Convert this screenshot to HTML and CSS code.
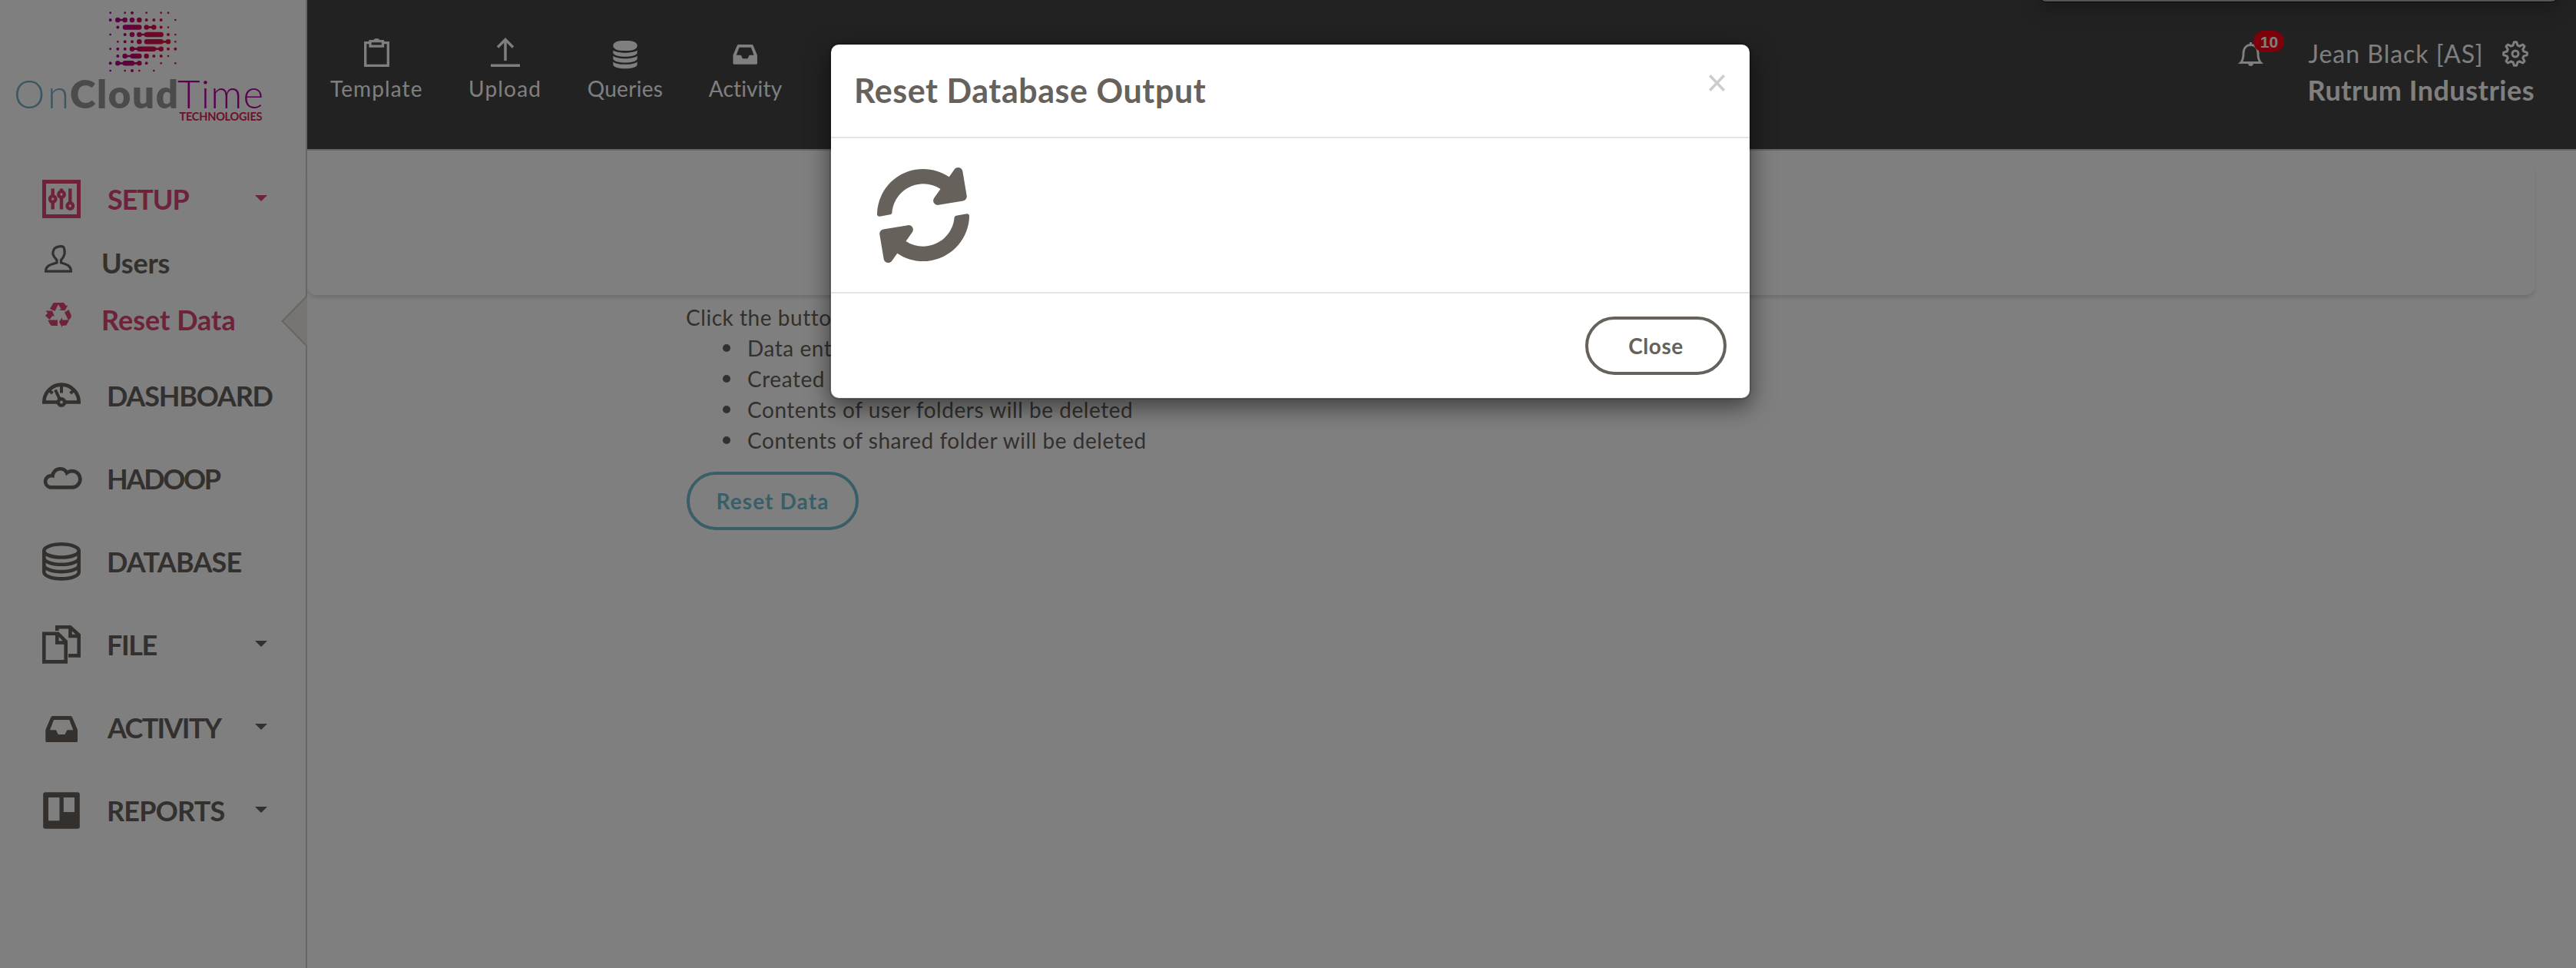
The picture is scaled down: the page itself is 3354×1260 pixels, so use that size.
FILE: index.html
```html
<!DOCTYPE html>
<html lang="en">
<head>
<meta charset="utf-8">
<title>Reset Data</title>
<link rel="stylesheet" href="styles.css">
</head>
<body>
<div class="wrapper">
  <aside class="sidebar">
    <div class="logo">
      <svg width="398" height="213" viewBox="0 0 398 213">
        <defs><linearGradient id="lg" gradientUnits="userSpaceOnUse" x1="431" y1="0" x2="685" y2="0"><stop offset="0" stop-color="#a80098"/><stop offset="0.6" stop-color="#d4104e"/><stop offset="1" stop-color="#ee1236"/></linearGradient></defs>
        <g transform="scale(.33333)" stroke="url(#lg)" stroke-linecap="round" fill="none">
          <path stroke-width="8" d="M431 50h.1M488 50h.1M572 50h.1M629 50h.1M657 50h.1M685 78h.1M657 106.500h.1M431 135h.1M685 135h.1M460 163h.1M685 163h.1M431 191h.1M657 219h.1M629 247h.1M685 247h.1M431 276h.1M488 276h.1M544 276h.1M601 276h.1M460 78.1h28M572 106.100h29M544 135.100h28M629 163.100h28M516 191.100h28M601 191.100h28M488 219.100h28M460 247.100h28M516 247.100h28"/>
          <path stroke-width="12" d="M516 50h.1M431 78h.1M572 78h.1M601 78h.1M629 78h.1M460 106.500h.1M629 106.500h.1M488 135h.1M657 135h.1M488 163h.1M516 163h.1M460 191h.1M488 191h.1M657 191h.1M685 191h.1M460 219h.1M601 219h.1M629 219h.1M431 247h.1M572 247h.1M516 276h.1"/>
          <path stroke-width="19.500" d="M460 78h.1M488 78h.1M516 78h.1M544 78h.1M489 106.500l55 .1M572 106.500h.1M601 106.500h.1M516 135h.1M544 135h.1M573 135l56 .1M544 163h.1M573 163l56 .1M657 163h.1M516 191h.1M544 191l56 .1M629 191h.1M488 219h.1M518 219l26 .1M572 219h.1M460 247h.1M488 247l28 .1M544 247h.1"/>
        </g>
        <g class="logo-word">
          <text class="w-on" x="18" y="140.500" textLength="72">On</text>
          <text class="w-cloud" x="91" y="140.500" textLength="141">Cloud</text>
          <text class="w-time" x="231" y="140.500" textLength="112">Time</text>
          <text class="w-tech" x="233.500" y="157" textLength="108">TECHNOLOGIES</text>
        </g>
      </svg>
    </div>
    <nav>
      <a class="item setup active"><svg class="ico" viewBox="0 0 50 50"><path fill="none" stroke="currentColor" stroke-width="5" d="M2.500 2.500h45v45h-45z"/><path stroke="currentColor" stroke-width="4.400" d="M13.700 11.500v27M25 11.500v27M36.300 11.500v27"/><g fill="#fff" stroke="currentColor" stroke-width="4.300"><circle cx="13.700" cy="25" r="3.800"/><circle cx="25" cy="19" r="3.800"/><circle cx="36.300" cy="34" r="3.800"/></g></svg><span>SETUP</span><i class="caret"></i></a>
      <div class="sub">
        <a class="subitem users"><svg width="36" height="36" viewBox="0 0 36 36"><path fill="none" stroke="currentColor" stroke-width="3.200" d="M1.500 34.200C1.500 27 8 25 16 23V19.500C12.500 16 11.500 14 10.800 11.500C11 9 11.300 7.500 12 6C14 1.500 24 0 25.500 4C26.500 7 26.300 8.500 26 11.500C25.500 14 24.500 16.500 21.500 19.500V23C29 25 34.500 27 34.500 34.200Z"/></svg><span>Users</span></a>
        <a class="subitem reset active"><svg width="36" height="34" viewBox="-1 0 36 34"><path fill="currentColor" d="M6 8L10 1L11.500 0H18L12.500 11ZM15.500 0H24L27 4L29.500 3L25.500 10.200L17.500 9.500L20.500 8ZM.5 10.500H9L12 18L9.500 17L5.500 22L0 17L3 13.500ZM5.500 22.500H16V30H8L6 28L3.500 23ZM25 12.500L30.500 9L34 17L33 20L30 23ZM18 25L22 19V22.500H31L27.500 29.500L22 30V32.700Z"/></svg><span>Reset Data</span></a>
      </div>
      <a class="item dash"><svg class="ico" viewBox="0 0 50 50"><g fill="none" stroke="currentColor"><path stroke-width="4.600" d="M2.300 33.500A22.700 22.900 0 0 1 47.700 33.500Z"/><path stroke-width="4" d="M25 11v10.500M17 17.500L23 30M9.500 18.500l4 3.500M40.500 18.500l-4 3.500"/></g><circle cx="25" cy="33.500" r="4.200" fill="#fff" stroke="currentColor" stroke-width="4.500"/></svg><span>DASHBOARD</span></a>
      <a class="item hadoop"><svg class="ico" viewBox="0 0 50 50"><path fill="none" stroke="currentColor" stroke-width="4.700" d="M10 36.300A7.650 7.650 0 0 1 13.500 21.300C15 10.500 28.500 9.500 32 17.500A10.600 10.600 0 1 1 38 36.300Z"/></svg><span>HADOOP</span></a>
      <a class="item database"><svg class="ico" viewBox="0 0 50 50"><g fill="none" stroke="currentColor" stroke-width="4.600"><ellipse cx="25" cy="10.900" rx="22.700" ry="8.600"/><path d="M2.300 10.900V38.800A22.700 8.600 0 0 0 47.700 38.800V10.900M2.300 20.200A22.700 8.600 0 0 0 47.700 20.200M2.300 29.500A22.700 8.600 0 0 0 47.700 29.500"/></g></svg><span>DATABASE</span></a>
      <a class="item file"><svg class="ico" viewBox="0 0 50 50"><g fill="none" stroke="currentColor" stroke-width="4.600"><path d="M2.300 10.700H20.500L30.700 21V47.400H2.300ZM19.300 10.700V22.500H31M19.300 7V2.300H36.500L47.700 12.500V39.400H34M36.500 2.300V14H48"/></g></svg><span>FILE</span><i class="caret"></i></a>
      <a class="item activity"><svg class="ico" viewBox="0 0 50 50"><path fill="currentColor" fill-rule="evenodd" d="M13.500 10H36.800Q38.300 10 39 11.500L46 28V42.500Q46 44 44.500 44H5.800Q4.300 44 4.300 42.500V28L11.300 11.500Q12 10 13.500 10ZM15 15L10 28.300H18L20.700 34H29.500L32.300 28.300H40.300L35.300 15Z"/></svg><span>ACTIVITY</span><i class="caret"></i></a>
      <a class="item reports"><svg class="ico" viewBox="0 0 50 50"><path fill="currentColor" fill-rule="evenodd" d="M4 1.300H46Q48.800 1.300 48.800 4V46Q48.800 48.700 46 48.700H4Q1.200 48.700 1.200 46V4Q1.200 1.300 4 1.300ZM8 8V38.300H22.500V8ZM27.800 8V27H42V8Z"/></svg><span>REPORTS</span><i class="caret"></i></a>
    </nav>
    <svg class="pointer" width="34" height="66" viewBox="0 0 34 66"><path fill="#eeebe4" d="M34 1L1 33L34 65Z"/><path fill="none" stroke="#cfcdc8" stroke-width="2" d="M33 1L1.500 33L33 65"/></svg>
  </aside>
  <main class="main">
    <header class="topbar">
      <div class="tools">
        <a class="tool t-template"><svg viewBox="0 0 40 40"><g fill="none" stroke="currentColor"><path stroke-width="3.300" d="M11 5.700H5.700V35.400H35.300V5.700H30"/><path stroke-width="3.300" d="M12 3.700H28.500V10.200H12Z"/></g><path fill="currentColor" d="M16 4q0-4 4.300-4t4.300 4z"/></svg><span>Template</span></a>
        <a class="tool t-upload"><svg viewBox="0 0 40 40"><path fill="none" stroke="currentColor" stroke-width="3.500" d="M20 2V29M10 11.500L20 1.500L30 11.500M1 35.300H39"/></svg><span>Upload</span></a>
        <a class="tool t-queries"><svg viewBox="0 0 40 40"><g fill="currentColor"><path d="M4.300 15C9 19.600 31 19.600 35.700 15V18.500C35.700 25.500 4.300 25.500 4.300 18.500Z"/><path d="M4.300 22.700C9 27.300 31 27.300 35.700 22.700V26.200C35.700 33.200 4.300 33.200 4.300 26.200ZM4.300 30.400C9 35 31 35 35.700 30.400V34C35.700 41 4.300 41 4.300 34Z"/><rect x="4.300" y="3" width="31.400" height="13" rx="11" ry="6"/><path fill="none" stroke="#444" stroke-width="1.600" d="M4 14.500C9 18.800 31 18.800 36 14.500"/></g></svg><span>Queries</span></a>
        <a class="tool t-activity"><svg viewBox="0 0 40 40"><path transform="translate(1.200 .5) scale(.755)" fill="currentColor" fill-rule="evenodd" d="M13.500 10H36.800Q38.300 10 39 11.500L46 28V42.500Q46 44 44.500 44H5.800Q4.300 44 4.300 42.500V28L11.300 11.500Q12 10 13.500 10ZM15 15L10 28.300H18L20.700 34H29.500L32.300 28.300H40.300L35.300 15Z"/></svg><span>Activity</span></a>
      </div>
      <div class="account">
        <a class="bell"><svg width="31" height="32" viewBox="0 0 31 32"><path fill="none" stroke="currentColor" stroke-width="2.900" d="M2.500 26.500H28.500C25.500 23.500 25 20.500 25 14.500C25 7.500 21 3.500 15.500 3.500S6 7.500 6 14.500C6 20.500 5.500 23.500 2.500 26.500ZM15.500 0v4"/><path fill="currentColor" d="M12 27h7q0 4-3.500 4t-3.500-4z"/></svg><b class="badge">10</b></a>
        <div class="who">
          <div class="user"><span>Jean Black [AS]</span><svg width="34" height="34" viewBox="-17 -17 34 34"><g fill="none" stroke="currentColor" stroke-width="3"><path stroke-linejoin="round" d="M-1.600-15.300H1.600L3.100-10.800L5.500-9.800L9.700-12L12-9.700L9.800-5.500L10.800-3.100L15.300-1.600V1.600L10.800 3.100L9.800 5.500L12 9.700L9.700 12L5.500 9.800L3.100 10.800L1.600 15.300H-1.600L-3.100 10.800L-5.500 9.800L-9.700 12L-12 9.700L-9.800 5.500L-10.800 3.100L-15.300 1.600V-1.600L-10.800-3.100L-9.800-5.500L-12-9.700L-9.700-12L-5.500-9.800L-3.100-10.800Z"/><circle r="4"/></g></svg></div>
          <div class="company">Rutrum Industries</div>
        </div>
      </div>
    </header>
    <div class="panel"></div>
    <section class="content">
      <p>Click the button</p>
      <ul>
        <li>Data entered</li>
        <li>Created</li>
        <li>Contents of user folders will be deleted</li>
        <li class="shared">Contents of shared folder will be deleted</li>
      </ul>
      <button class="btn btn-info">Reset Data</button>
    </section>
  </main>
</div>
<div class="backdrop"></div>
<div class="popup-edge"></div>
<div class="modal">
  <div class="modal-header"><h4>Reset Database Output</h4><svg class="x" width="21" height="22" viewBox="0 0 21 22"><path stroke="#ccc" stroke-width="3.500" d="M1.200 1.200L19.800 20.800M19.800 1.200L1.200 20.800"/></svg></div>
  <div class="modal-body"><svg width="124" height="124" viewBox="0 0 512 512"><path transform="rotate(-9.500 256 256)" fill="#66615b" d="M370.720 133.280C339.458 104.008 298.888 87.962 255.848 88c-77.458.068-144.328 53.178-162.791 126.850-1.344 5.363-6.122 9.150-11.651 9.150H24.103c-7.498 0-13.194-6.807-11.807-14.176C33.933 94.924 134.813 8 256 8c66.448 0 126.791 26.136 171.315 68.685L463.030 40.970C478.149 25.851 504 36.559 504 57.941V192c0 13.255-10.745 24-24 24H345.941c-21.382 0-32.090-25.851-16.971-40.971l41.750-41.749zM32 296h134.059c21.382 0 32.090 25.851 16.971 40.971l-41.750 41.750c31.262 29.273 71.835 45.319 114.876 45.280 77.418-.070 144.315-53.144 162.787-126.849 1.344-5.363 6.122-9.150 11.651-9.150h57.304c7.498 0 13.194 6.807 11.807 14.176C478.067 417.076 377.187 504 256 504c-66.448 0-126.791-26.136-171.315-68.685L48.970 471.030C33.851 486.149 8 475.441 8 454.059V320c0-13.255 10.745-24 24-24z"/></svg></div>
  <div class="modal-footer"><button class="btn btn-close">Close</button></div>
</div>
</body>
</html>
```
FILE: styles.css
```css
* { box-sizing: border-box; }
body {
  margin: 0;
  height: 1260px;
  overflow: hidden;
  background: #fff;
  color: #66615b;
  font: 400 28px/40px Lato, "Open Sans", sans-serif;
}
svg { display: block; flex: none; overflow: visible; }
.wrapper { display: flex; height: 1260px; }

/* Sidebar */
.sidebar { position: relative; width: 400px; border-right: 2px solid #d0cfcd; }
.logo { height: 213px; }
.logo-word { font-size: 51px; }
.w-on { font-weight: 300; fill: #78aec2; }
.w-cloud { font-weight: 800; fill: #949698; }
.w-time { font-weight: 300; fill: #b400a0; }
.w-tech { font-size: 14.5px; font-weight: 700; fill: #e01c56; }
.item, .subitem { display: flex; align-items: center; color: #66615b; font-size: 36px; font-weight: 700; }
.item { height: 108px; padding: 0 50px 0 55px; }
.ico { width: 50px; height: 50px; margin-right: 34px; }
.item .caret { margin-left: auto; margin-bottom: 2px; border: 8px solid transparent; border-top-color: currentColor; border-bottom: 0; }
.item.active, .subitem.active { color: #dc4672; }
.item.setup { height: 92px; }
.sub { padding-bottom: 8px; }
.subitem { height: 74px; padding-left: 58px; }
.subitem svg { margin: 0 37px 10px 0; }
.subitem span { margin-left: 1px; }
.setup span { letter-spacing: -1.1px; margin-left: 1px; }
.users span { letter-spacing: -.2px; }
.reset span { letter-spacing: 0; }
.dash span { letter-spacing: -1.2px; }
.hadoop span { letter-spacing: -2.3px; }
.database span { letter-spacing: -.8px; }
.file span { letter-spacing: -1.4px; }
.activity span { letter-spacing: -1.7px; margin-left: 1px; }
.reports span { letter-spacing: -.8px; }
.pointer { position: absolute; right: -2px; top: 385px; }

/* Top bar */
.main { flex: 1; min-width: 0; }
.topbar { display: flex; justify-content: space-between; height: 196px; padding: 50px 54px 0 30px; background: #444; border-bottom: 2px solid #ccc; color: #fff; }
.tools { display: flex; gap: 59.5px; }
.tool { display: flex; flex-direction: column; align-items: center; gap: 5px; }
.tool svg { width: 40px; height: 40px; }
.t-template { letter-spacing: 1.1px; }
.t-upload { letter-spacing: 1.2px; }
.t-queries { letter-spacing: .3px; }
.t-activity { letter-spacing: .15px; }
.account { display: flex; }
.bell { position: relative; margin: 5px 59px 0 0; }
.badge { position: absolute; left: 19px; top: -15px; width: 40px; height: 28px; border-radius: 14px; background: #fb0017; font: 700 21px/29px "Liberation Sans", Arial, sans-serif; text-align: center; }
.user { display: flex; height: 43px; font-size: 32px; letter-spacing: 1px; }
.user svg { margin: 3px 0 0 24px; }
.company { font-size: 36px; line-height: 48px; font-weight: 700; letter-spacing: .5px; margin-left: -1px; }

/* Page content */
.panel { height: 172px; margin: 16px 54px 0 0; border-radius: 12px; background: #fff; box-shadow: 0 4px 4px rgba(204, 197, 185, .5); }
.content { padding: 9px 0 0 493px; letter-spacing: .54px; }
p { margin: 0; }
ul { margin: 0 0 21px; padding-left: 80px; list-style: none; }
li { display: flex; align-items: center; }
li::before { content: ""; width: 10px; height: 10px; margin: 0 22px 0 -32px; border-radius: 50%; background: currentColor; }
.btn { display: block; height: 76px; border: 4px solid; border-radius: 40px; padding: 0; background: transparent; font: 700 28px/40px Lato, sans-serif; }
.btn-info { width: 224px; margin-left: 1px; color: #74bcd0; letter-spacing: 1.1px; }

/* Modal */
.backdrop { position: absolute; inset: 0; background: rgba(0, 0, 0, .5); }
.popup-edge { position: absolute; left: 2654px; top: -18px; width: 678px; height: 21px; border-radius: 10px; background: #555; border: 1px solid #080808; box-shadow: 0 8px 24px rgba(0, 0, 0, .3); }
.modal { position: absolute; left: 1080px; top: 56px; width: 1200px; height: 464px; border: 2px solid rgba(0, 0, 0, .2); border-radius: 12px; background: #fff; background-clip: padding-box; box-shadow: 0 10px 30px rgba(0, 0, 0, .5); }
.modal-header { display: flex; align-items: center; justify-content: space-between; height: 122px; padding: 0 32px 0 30px; border-bottom: 2px solid #e5e5e5; }
h4 { margin: 0; font-size: 43px; line-height: 52px; font-weight: 700; letter-spacing: .55px; }
.x { margin-bottom: 20px; }
.modal-body { height: 202px; padding: 38px 0 0 58px; border-bottom: 2px solid #e5e5e5; }
.modal-footer { display: flex; justify-content: flex-end; padding: 30px; }
.btn-close { width: 184px; color: #66615b; letter-spacing: .5px; }
```
